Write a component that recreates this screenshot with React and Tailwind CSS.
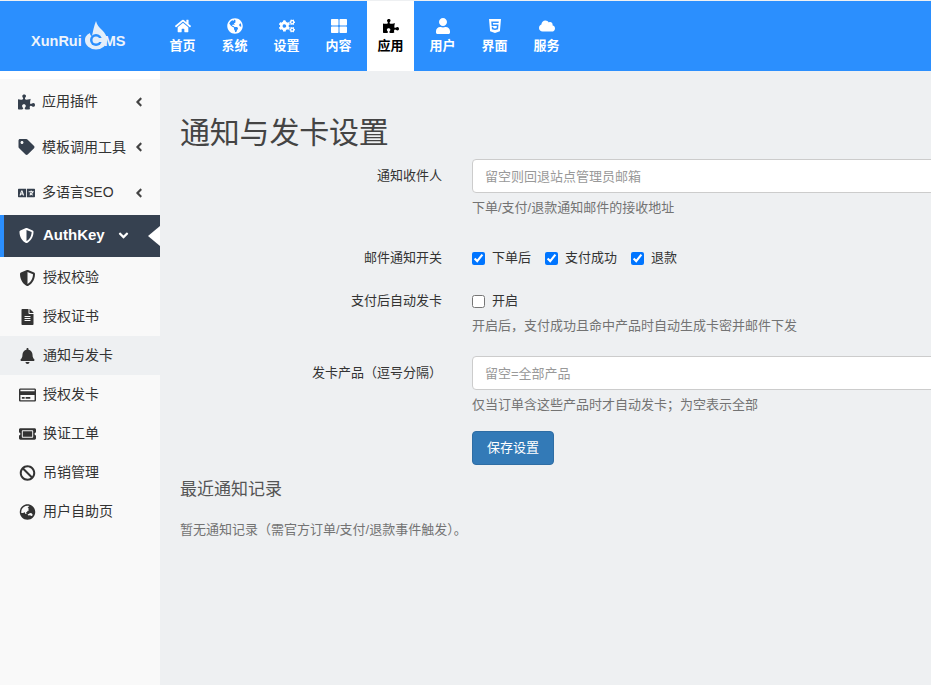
import {
  FaHome, FaGlobeAmericas, FaCogs, FaThLarge, FaPuzzlePiece, FaUser, FaHtml5, FaCloud,
  FaTag, FaLanguage, FaShieldAlt, FaFileAlt, FaBell, FaRegCreditCard, FaTicketAlt, FaBan, FaGlobeAsia,
  FaAngleLeft, FaAngleDown,
} from 'react-icons/fa'

const font = "font-['Liberation_Sans','Noto_Sans_CJK_SC',sans-serif]"

const navItems = [
  { label: '首页', icon: FaHome },
  { label: '系统', icon: FaGlobeAmericas },
  { label: '设置', icon: FaCogs },
  { label: '内容', icon: FaThLarge },
  { label: '应用', icon: FaPuzzlePiece, active: true },
  { label: '用户', icon: FaUser },
  { label: '界面', icon: FaHtml5 },
  { label: '服务', icon: FaCloud },
]

const menuItems = [
  { label: '应用插件', icon: FaPuzzlePiece },
  { label: '模板调用工具', icon: FaTag },
  { label: '多语言SEO', icon: FaLanguage },
]

const subItems = [
  { label: '授权校验', icon: FaShieldAlt },
  { label: '授权证书', icon: FaFileAlt },
  { label: '通知与发卡', icon: FaBell, active: true },
  { label: '授权发卡', icon: FaRegCreditCard },
  { label: '换证工单', icon: FaTicketAlt },
  { label: '吊销管理', icon: FaBan },
  { label: '用户自助页', icon: FaGlobeAsia },
]

function Logo() {
  return (
    <div className="w-[159px] shrink-0 pl-[31px] pt-[31px] relative">
      <div className="flex items-center text-[14.5px] font-bold leading-[18px] text-[#eef4fb]">
        <span>XunRui</span>
        <span className="w-[23px]" />
        <span className="-ml-[1px]">MS</span>
      </div>
      <svg className="absolute left-[84px] top-[20px]" width="24" height="29" viewBox="0 0 24 29">
        <path
          d="M12 0c1 4 3 6 6 9 3 3 5 6 5 10a11 9.500 0 0 1-22 0c0-4 3-6 5-7 0 2 1 3 2 3 1-5 2-10 4-15z"
          fill="#e4eefa"
        />
        <circle cx="12" cy="19" r="6" fill="#2b8ffe" />
        <circle cx="12" cy="19" r="3.500" fill="#e4eefa" />
        <rect x="14" y="17" width="5" height="4" fill="#e4eefa" />
      </svg>
    </div>
  )
}

function TopNav() {
  return (
    <div className="mt-[1px] flex h-[70px] bg-[#2b8ffe]">
      <Logo />
      <div className="flex gap-[5px]">
        {navItems.map(({ label, icon: Icon, active }) => (
          <div
            key={label}
            className={`flex w-[47px] flex-col items-center pt-[17px] ${active ? 'bg-white text-black' : 'text-white'}`}
          >
            <Icon size={16} />
            <span className="mt-[2px] text-[13px] leading-[20px] font-bold">{label}</span>
          </div>
        ))}
      </div>
    </div>
  )
}

function Sidebar() {
  return (
    <div className="w-[160px] shrink-0 border-t-[8px] border-white bg-[#f9f9f9] text-[#333]">
      {menuItems.map(({ label, icon: Icon }) => (
        <div key={label} className="flex h-[45.500px] items-center pl-[18px]">
          <Icon size={16} className="w-[17px] shrink-0 text-[#36404e]" />
          <span className="ml-[7px] w-[91px] truncate text-[14px]">{label}</span>
          <FaAngleLeft size={14} className="ml-[-1px] text-[#444]" />
        </div>
      ))}
      <div className="relative mt-[-1px] flex h-[42px] items-center border-l-[4px] border-[#2b8ffe] bg-[#364150] pl-[15px] text-white">
        <FaShieldAlt size={15} className="w-[15px] shrink-0" />
        <span className="ml-[9px] w-[64px] truncate text-[15px] font-bold">AuthKey</span>
        <FaAngleDown size={15} className="ml-[9px]" />
        <span className="absolute right-0 top-[11px] h-0 w-0 border-y-[10px] border-r-[12px] border-y-transparent border-r-white" />
      </div>
      <div className="mt-[1.500px]">
        {subItems.map(({ label, icon: Icon, active }) => (
          <div
            key={label}
            className={`flex h-[39px] items-center pl-[19px] ${active ? 'bg-[#eef0f2]' : ''}`}
          >
            <Icon size={16} className="w-[17px] shrink-0 text-[#333]" />
            <span className="ml-[7px] text-[14px]">{label}</span>
          </div>
        ))}
      </div>
    </div>
  )
}

function FormRow({ label, className, labelClass, children }) {
  return (
    <div className={`flex ${className}`}>
      <div className={`w-[262px] shrink-0 text-right text-[13px] leading-[20px] text-[#333] ${labelClass}`}>
        {label}
      </div>
      <div className="ml-[30px] min-w-0 flex-1">{children}</div>
    </div>
  )
}

function TextField({ placeholder }) {
  return (
    <input
      placeholder={placeholder}
      className="block h-[34px] w-[600px] rounded-l-[4px] border border-[#ccc] bg-white px-3 text-[13px] outline-none placeholder:text-[#999]"
    />
  )
}

function Check({ label, checked }) {
  return (
    <label className="flex items-center">
      <input type="checkbox" defaultChecked={checked} className="m-0 h-[13px] w-[13px] accent-[#0075ff]" />
      <span className="ml-[7px] text-[13px] leading-[20px] text-[#333]">{label}</span>
    </label>
  )
}

function Content() {
  return (
    <div className="min-w-0 flex-1 pl-[20px] pt-[40px]">
      <h1 className="text-[30px] leading-[44px] font-normal tracking-[-0.2px] text-[#444]">通知与发卡设置</h1>

      <FormRow label="通知收件人" className="mt-[4px]" labelClass="pt-[7px]">
        <TextField placeholder="留空则回退站点管理员邮箱" />
        <p className="mt-[5px] text-[13px] leading-[20px] text-[#737373]">下单/支付/退款通知邮件的接收地址</p>
      </FormRow>

      <FormRow label="邮件通知开关" className="mt-[30px]">
        <div className="flex gap-[14px]">
          <Check label="下单后" checked />
          <Check label="支付成功" checked />
          <Check label="退款" checked />
        </div>
      </FormRow>

      <FormRow label="支付后自动发卡" className="mt-[23px]">
        <Check label="开启" />
        <p className="mt-[5px] text-[13px] leading-[20px] text-[#737373]">开启后，支付成功且命中产品时自动生成卡密并邮件下发</p>
      </FormRow>

      <FormRow label="发卡产品（逗号分隔）" className="mt-[20px]" labelClass="pt-[7px]">
        <TextField placeholder="留空=全部产品" />
        <p className="mt-[5px] text-[13px] leading-[20px] text-[#737373]">仅当订单含这些产品时才自动发卡；为空表示全部</p>
        <button className="mt-[16px] block h-[34px] w-[82px] rounded-[4px] border border-[#2e6da4] bg-[#337ab7] text-[13px] text-white">
          保存设置
        </button>
      </FormRow>

      <h3 className="mt-[13px] text-[17px] leading-[24px] text-[#555]">最近通知记录</h3>
      <p className="mt-[18px] text-[13px] leading-[20px] text-[#737373]">暂无通知记录（需官方订单/支付/退款事件触发）。</p>
    </div>
  )
}

export default function App() {
  return (
    <div className={`flex h-[685px] w-[931px] flex-col overflow-hidden bg-[#eef0f2] ${font}`}>
      <TopNav />
      <div className="flex min-h-0 flex-1">
        <Sidebar />
        <Content />
      </div>
    </div>
  )
}
